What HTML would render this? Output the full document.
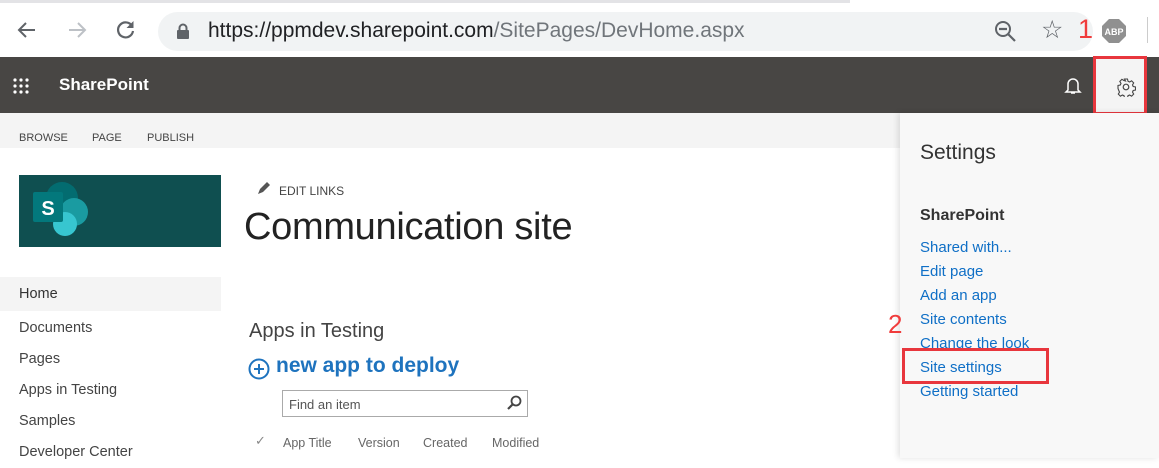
<!DOCTYPE html>
<html><head><style>
*{margin:0;padding:0;box-sizing:border-box}
body{width:1159px;height:458px;overflow:hidden;background:#fff;font-family:"Liberation Sans",sans-serif;position:relative}
.a{position:absolute;white-space:nowrap}
</style></head><body>
<div class="a" style="left:0;top:0;width:850px;height:3px;background:#e3e3e6"></div>
<div class="a" style="left:0;top:3px;width:1159px;height:54px;background:#fff"></div>
<svg class="a" style="left:16px;top:19px" width="22" height="22" viewBox="0 0 22 22"><path d="M19 11H4M10 4l-7 7 7 7" stroke="#5f6368" stroke-width="2" fill="none"/></svg>
<svg class="a" style="left:66px;top:19px" width="22" height="22" viewBox="0 0 22 22"><path d="M3 11h15M12 4l7 7-7 7" stroke="#bdc1c6" stroke-width="2" fill="none"/></svg>
<svg class="a" style="left:114px;top:18px" width="24" height="24" viewBox="0 0 24 24"><path d="M18 8A7.5 7.5 0 1 0 19 13" stroke="#5f6368" stroke-width="2.2" fill="none"/><path d="M19.5 3v7h-7z" fill="#5f6368"/></svg>
<div class="a" style="left:158px;top:12px;width:935px;height:39px;border-radius:20px;background:#f1f3f4"></div>
<svg class="a" style="left:176px;top:23px" width="14" height="17" viewBox="0 0 14 17"><path d="M3.5 7V5a3.5 3.5 0 0 1 7 0v2" stroke="#5f6368" stroke-width="2" fill="none"/><rect x="1" y="7" width="12" height="9" rx="1" fill="#5f6368"/></svg>
<div class="a" style="left:208px;top:19px;font-size:21px;color:#202124">https://ppmdev.sharepoint.com<span style="color:#70757a">/SitePages/DevHome.aspx</span></div>
<svg class="a" style="left:994px;top:20px" width="24" height="24" viewBox="0 0 24 24"><circle cx="9" cy="9" r="7" stroke="#5f6368" stroke-width="2" fill="none"/><path d="M5 9h8M14 14l7 7" stroke="#5f6368" stroke-width="2.2"/></svg>
<div class="a" style="left:1041px;top:15px;font-size:25px;color:#5f6368">☆</div>
<div class="a" style="left:1078px;top:14px;font-size:27px;color:#f03c3c">1</div>
<svg class="a" style="left:1101px;top:18px" width="26" height="26" viewBox="0 0 26 26"><path d="M8 1h10l7 7v10l-7 7H8l-7-7V8z" fill="#909090"/><text x="13" y="17" font-size="9" font-weight="bold" fill="#fff" text-anchor="middle" font-family="Liberation Sans">ABP</text></svg>
<div class="a" style="left:1147px;top:17px;width:1px;height:26px;background:#ccc"></div>
<div class="a" style="left:0;top:57px;width:1159px;height:56px;background:#484644"></div>
<svg class="a" style="left:12px;top:77px" width="20" height="18" viewBox="0 0 20 18"><g fill="#fff"><circle cx="3" cy="3" r="1.6"/><circle cx="9" cy="3" r="1.6"/><circle cx="15" cy="3" r="1.6"/><circle cx="3" cy="9" r="1.6"/><circle cx="9" cy="9" r="1.6"/><circle cx="15" cy="9" r="1.6"/><circle cx="3" cy="15" r="1.6"/><circle cx="9" cy="15" r="1.6"/><circle cx="15" cy="15" r="1.6"/></g></svg>
<div class="a" style="left:59px;top:75px;font-size:17px;font-weight:bold;color:#fff">SharePoint</div>
<svg class="a" style="left:1064px;top:76px" width="18" height="20" viewBox="0 0 18 20"><path d="M4 14V8a5 5 0 0 1 10 0v6l2 2H2z" stroke="#fff" stroke-width="1.5" fill="none"/><path d="M7 17h4" stroke="#fff" stroke-width="1.5"/></svg>
<div class="a" style="left:0;top:113px;width:1159px;height:35px;background:#f4f4f4"></div>
<div class="a" style="left:19px;top:132px;font-size:11px;color:#444">BROWSE</div>
<div class="a" style="left:92px;top:132px;font-size:11px;color:#444">PAGE</div>
<div class="a" style="left:147px;top:132px;font-size:11px;color:#444">PUBLISH</div>
<div class="a" style="left:1093px;top:56px;width:54px;height:59px;background:#f4f4f4;border:3px solid #e8363d"></div>
<svg class="a" style="left:1116px;top:77px" width="20" height="20" viewBox="0 0 20 20"><circle cx="10" cy="10" r="2.8" stroke="#444" stroke-width="1.2" fill="none"/><path d="M8.5 2h3l.5 2.2 1.6.8 2-1.2 2.1 2.1-1.2 2 .7 1.6 2.3.5v3l-2.3.5-.7 1.6 1.2 2-2.1 2.1-2-1.2-1.6.7-.5 2.3h-3l-.5-2.3-1.6-.7-2 1.2-2.1-2.1 1.2-2-.7-1.6L2 11.5v-3l2.3-.5.7-1.6-1.2-2 2.1-2.1 2 1.2L9.5 4z" stroke="#444" stroke-width="1.1" fill="none"/></svg>
<div class="a" style="left:900px;top:113px;width:259px;height:345px;background:#f8f8f8;box-shadow:-2px 0 6px rgba(0,0,0,.12)"></div>
<div class="a" style="left:920px;top:141px;font-size:21px;color:#333">Settings</div>
<div class="a" style="left:920px;top:207px;font-size:16px;font-weight:bold;color:#333">SharePoint</div>
<div class="a" style="left:920px;top:236px;font-size:15px;color:#0f6fc6;line-height:24px">Shared with...<br>Edit page<br>Add an app<br>Site contents<br>Change the look<br>Site settings<br>Getting started</div>
<div class="a" style="left:888px;top:309px;font-size:26px;color:#f03c3c">2</div>
<div class="a" style="left:902px;top:348px;width:147px;height:36px;border:3px solid #e8363d"></div>
<div class="a" style="left:19px;top:175px;width:202px;height:72px;background:#0f4f50"></div>
<svg class="a" style="left:30px;top:178px" width="70" height="62" viewBox="0 0 70 62"><circle cx="32" cy="20" r="16" fill="#036c70"/><circle cx="44" cy="34" r="14" fill="#1a9ba1"/><circle cx="35" cy="46" r="12" fill="#37c6d0"/><rect x="3" y="14" width="30" height="30" rx="2" fill="#03787c"/><text x="18" y="37" font-size="20" font-weight="bold" fill="#fff" text-anchor="middle" font-family="Liberation Sans">S</text></svg>
<div class="a" style="left:0;top:277px;width:221px;height:34px;background:#f4f4f4"></div>
<div class="a" style="left:19px;top:286px;font-size:14.5px;color:#333">Home</div>
<div class="a" style="left:19px;top:313px;font-size:14.5px;color:#444;line-height:31px">Documents<br>Pages<br>Apps in Testing<br>Samples<br>Developer Center</div>
<svg class="a" style="left:257px;top:182px" width="13" height="13" viewBox="0 0 13 13"><path d="M1 12l2-5 7-7 3 3-7 7z" fill="#555"/></svg>
<div class="a" style="left:279px;top:184px;font-size:12px;color:#444">EDIT LINKS</div>
<div class="a" style="left:244px;top:206px;font-size:38px;letter-spacing:-0.3px;color:#222">Communication site</div>
<div class="a" style="left:249px;top:320px;font-size:20px;color:#444">Apps in Testing</div>
<svg class="a" style="left:248px;top:358px" width="22" height="22" viewBox="0 0 22 22"><circle cx="11" cy="11" r="9.5" stroke="#1e73be" stroke-width="2" fill="none"/><path d="M11 6v10M6 11h10" stroke="#1e73be" stroke-width="2"/></svg>
<div class="a" style="left:276px;top:354px;font-size:21px;font-weight:bold;color:#1e73be">new app to deploy</div>
<div class="a" style="left:282px;top:390px;width:246px;height:27px;border:1px solid #aaa;background:#fff"></div>
<div class="a" style="left:289px;top:397px;font-size:13px;color:#555">Find an item</div>
<svg class="a" style="left:506px;top:395px" width="16" height="16" viewBox="0 0 16 16"><circle cx="10" cy="6" r="4.5" stroke="#444" stroke-width="1.8" fill="none"/><path d="M7 9l-5 5" stroke="#444" stroke-width="2.2"/></svg>
<div class="a" style="left:255px;top:433px;font-size:13px;color:#888">✓</div>
<div class="a" style="left:283px;top:436px;font-size:12.5px;color:#666">App Title</div>
<div class="a" style="left:358px;top:436px;font-size:12.5px;color:#666">Version</div>
<div class="a" style="left:423px;top:436px;font-size:12.5px;color:#666">Created</div>
<div class="a" style="left:492px;top:436px;font-size:12.5px;color:#666">Modified</div>
</body></html>
